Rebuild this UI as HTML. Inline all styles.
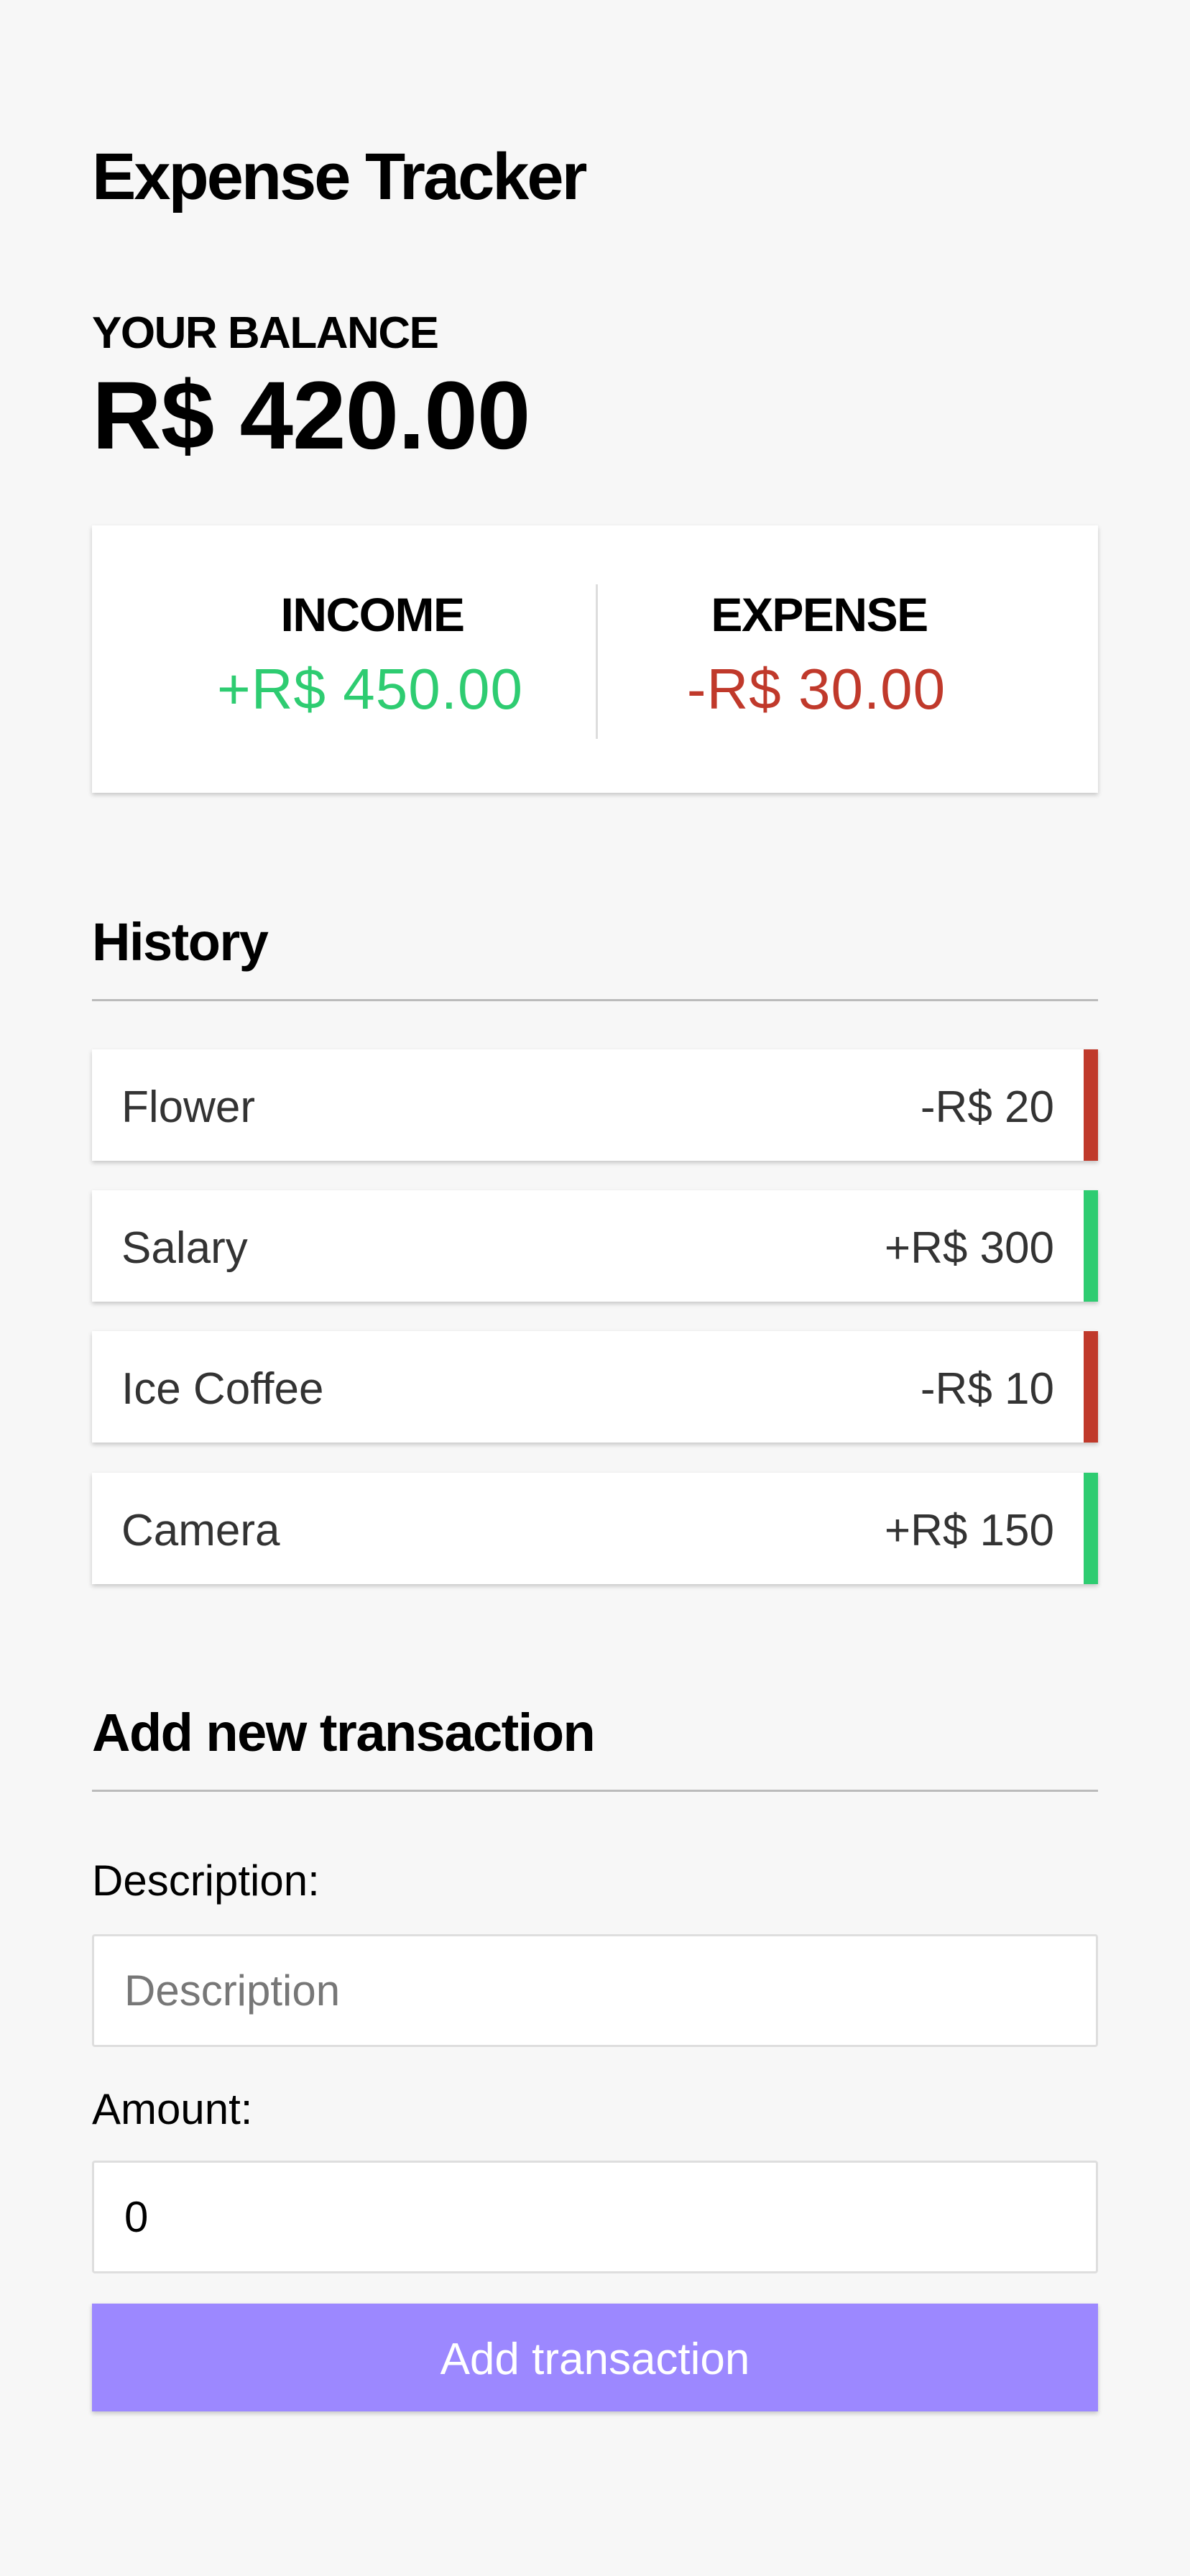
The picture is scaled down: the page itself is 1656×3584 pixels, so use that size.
<!DOCTYPE html>
<html><head><meta charset="utf-8">
<style>
*{box-sizing:border-box;margin:0;padding:0}
html,body{width:1656px;height:3584px;background:#f7f7f7;font-family:"Liberation Sans",sans-serif;color:#000;overflow:hidden}
.a{position:absolute}
.title{left:128px;top:194px;font-size:92px;font-weight:bold;letter-spacing:-3px}
.bl{left:128px;top:428px;font-size:62px;font-weight:bold;letter-spacing:-1.5px}
.bal{left:128px;top:502px;font-size:134px;font-weight:bold;letter-spacing:-1px}
.card{left:128px;top:731px;width:1400px;height:372px;background:#fff;box-shadow:0 3px 6px rgba(0,0,0,.2)}
.lab{font-size:66px;font-weight:bold;letter-spacing:-1.5px;line-height:1;width:600px;text-align:center}
.val{font-size:80px;letter-spacing:1px;line-height:1;width:600px;text-align:center}
.h3{left:128px;font-size:74px;font-weight:bold;letter-spacing:-1.5px}
.rule{left:128px;width:1400px;height:3px;background:#bbb}
.item{left:128px;width:1400px;height:155px;background:#fff;box-shadow:0 3px 6px rgba(0,0,0,.2);border-right:20px solid;font-size:62px;color:#333;display:flex;justify-content:space-between;align-items:center;padding:6px 41px 0 41px}
.lbl{left:128px;font-size:60px}
.inp{left:128px;width:1400px;height:157px;background:#fff;border:3px solid #dedede;border-radius:4px;font-size:60px;padding-left:42px;display:flex;align-items:center}
</style></head><body>
<div class="a title">Expense Tracker</div>
<div class="a bl">YOUR BALANCE</div>
<div class="a bal">R$ 420.00</div>
<div class="a card">
 <div class="a lab" style="left:90px;top:91px">INCOME</div>
 <div class="a val" style="left:87px;top:188px;color:#2ecc71">+R$ 450.00</div>
 <div class="a" style="left:701px;top:82px;width:3px;height:215px;background:#ddd"></div>
 <div class="a lab" style="left:712px;top:91px">EXPENSE</div>
 <div class="a val" style="left:708px;top:188px;color:#c0392b">-R$ 30.00</div>
</div>
<div class="a h3" style="top:1268px">History</div>
<div class="a rule" style="top:1390px"></div>
<div class="a item" style="top:1460px;border-color:#c0392b"><span>Flower</span><span>-R$ 20</span></div>
<div class="a item" style="top:1656px;border-color:#2ecc71"><span>Salary</span><span>+R$ 300</span></div>
<div class="a item" style="top:1852px;border-color:#c0392b"><span>Ice Coffee</span><span>-R$ 10</span></div>
<div class="a item" style="top:2049px;border-color:#2ecc71"><span>Camera</span><span>+R$ 150</span></div>
<div class="a h3" style="top:2368px">Add new transaction</div>
<div class="a rule" style="top:2490px"></div>
<div class="a lbl" style="top:2582px">Description:</div>
<div class="a inp" style="top:2691px;color:#777">Description</div>
<div class="a lbl" style="top:2900px">Amount:</div>
<div class="a inp" style="top:3006px;color:#000">0</div>
<div class="a" style="left:128px;top:3205px;width:1400px;height:150px;background:#9c88ff;box-shadow:0 3px 6px rgba(0,0,0,.2);color:#fff;font-size:62px;display:flex;align-items:center;justify-content:center;padding-top:4px">Add transaction</div>
</body></html>
